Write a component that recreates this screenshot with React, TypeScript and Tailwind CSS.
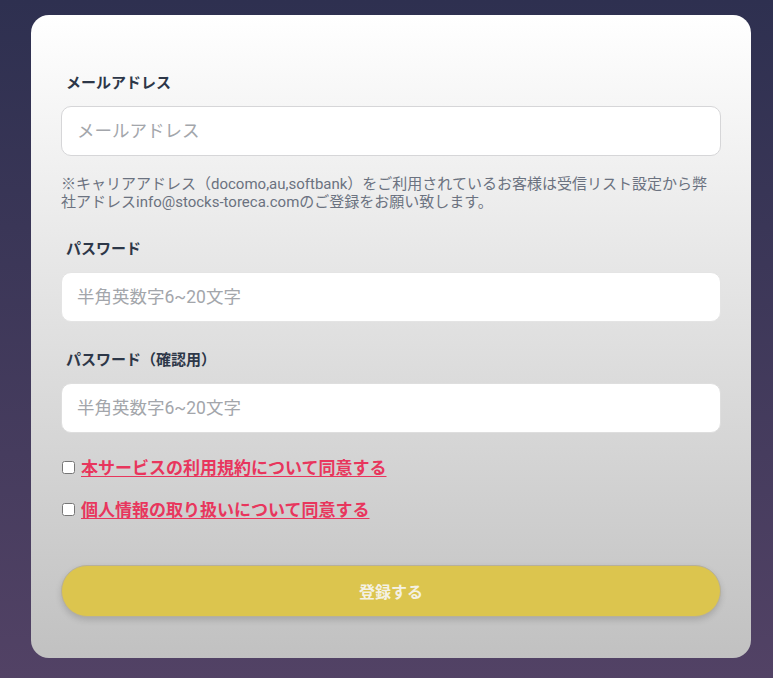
export default function App() {
  const font = { fontFamily: 'Roboto, "Noto Sans CJK JP", sans-serif' };
  return (
    <div
      className="min-h-[678px] w-full bg-gradient-to-b from-[#2e3050] to-[#524265] pt-[15px] pb-[20px] pl-[31px] pr-[22px]"
      style={font}
    >
      <div className="w-[720px] h-[643px] rounded-[18px] bg-gradient-to-b from-[#ffffff] to-[#c1c1c1] px-[30px] pt-[56px]">
        <form className="flex flex-col" onSubmit={(e) => e.preventDefault()}>
          <label className="pl-[5px] text-[15px] font-bold leading-[24px] text-[#2d3748]">メールアドレス</label>
          <input
            type="email"
            placeholder="メールアドレス"
            className="mt-[11px] h-[50px] w-full rounded-[10px] border border-[#d6d6d8] bg-white px-[15px] text-[17.5px] text-[#333] placeholder:text-[#a3a6ab] outline-none"
          />
          <p className="mt-[19px] text-[15px] leading-[18px] text-[#6b7280]">
            ※キャリアアドレス（docomo,au,softbank）をご利用されているお客様は受信リスト設定から弊社アドレスinfo@stocks-toreca.comのご登録をお願い致します。
          </p>

          <label className="mt-[26px] pl-[5px] text-[15px] font-bold leading-[24px] text-[#2d3748]">パスワード</label>
          <input
            type="password"
            placeholder="半角英数字6~20文字"
            className="mt-[11px] h-[50px] w-full rounded-[10px] border border-[#e4e4e4] bg-white px-[15px] text-[17.5px] text-[#333] placeholder:text-[#a3a6ab] outline-none"
          />

          <label className="mt-[26px] pl-[5px] text-[15px] font-bold leading-[24px] text-[#2d3748]">パスワード（確認用）</label>
          <input
            type="password"
            placeholder="半角英数字6~20文字"
            className="mt-[11px] h-[50px] w-full rounded-[10px] border border-[#dedede] bg-white px-[15px] text-[17.5px] text-[#333] placeholder:text-[#a3a6ab] outline-none"
          />

          <div className="mt-[22px] flex flex-col gap-[18px]">
            <label className="flex items-center gap-[6px] pl-[1px]">
              <input type="checkbox" className="h-[13px] w-[13px]" />
              <a
                href="#"
                className="text-[17px] font-bold leading-[24px] text-[#e8365d] underline underline-offset-2"
                style={{ fontFamily: '"Noto Sans CJK JP", sans-serif' }}
              >
                本サービスの利用規約について同意する
              </a>
            </label>
            <label className="flex items-center gap-[6px] pl-[1px]">
              <input type="checkbox" className="h-[13px] w-[13px]" />
              <a
                href="#"
                className="text-[17px] font-bold leading-[24px] text-[#e8365d] underline underline-offset-2"
                style={{ fontFamily: '"Noto Sans CJK JP", sans-serif' }}
              >
                個人情報の取り扱いについて同意する
              </a>
            </label>
          </div>

          <button
            type="submit"
            className="mt-[44px] h-[52px] w-full rounded-full border border-[#b7b09a] bg-[#dcc54e] text-[16px] font-bold text-[#f4f1e4] shadow-[0_3px_6px_rgba(0,0,0,0.15)]"
            style={{ fontFamily: '"Noto Sans CJK JP", sans-serif' }}
          >
            登録する
          </button>
        </form>
      </div>
    </div>
  );
}
